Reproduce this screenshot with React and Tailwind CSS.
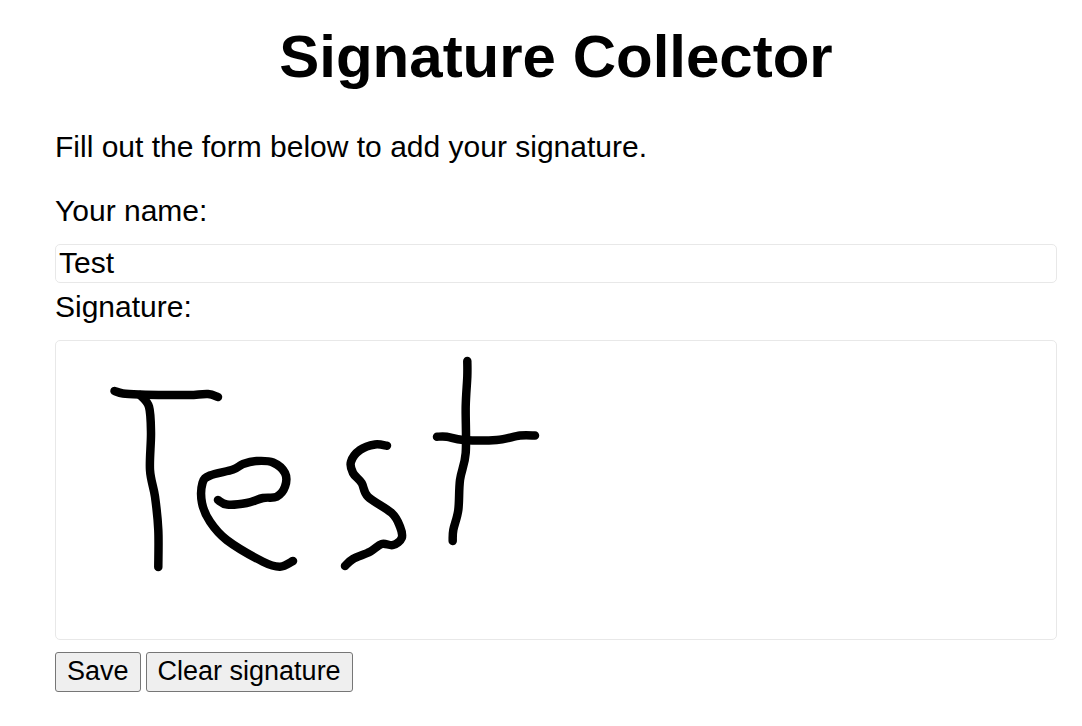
const strokes = [
  [[114.5,391],[123,393.5],[140,394.5],[166.7,395],[190,395],[208,394],[218,397]],
  [[140,395],[149,406.7],[151,433],[150,470],[155,496.7],[158.3,530],[158.3,567]],
  [[218,500],[227,504.5],[246.7,503],[263,498],[276.7,496.7],[285,486.7],[285,473],[273,462.5],[256.7,461],[243,464],[233,469.5],[210,475.5],[202.5,483],[202,503],[210,521.7],[226.7,540],[263,561.7],[280,566.7],[293,561]],
  [[387,445.7],[375,444.5],[360,450],[351,461.7],[353,473],[361.7,483],[368,496.7],[391.7,513],[400,526.7],[401.7,538],[393,545],[381.7,544],[370,551.7],[353,559],[345,566]],
  [[467.3,361],[467.3,376.7],[465.7,406.7],[465.7,453],[460,480],[458.3,510],[453.3,530],[452.7,541]],
  [[437,436.7],[446.7,436.7],[463.3,440],[496.7,440],[520,435.5],[535,435.5]],
];

function smooth(points) {
  let d = `M${points[0][0]} ${points[0][1]}`;
  for (let i = 0; i < points.length - 1; i++) {
    const p0 = points[Math.max(i - 1, 0)];
    const p1 = points[i];
    const p2 = points[i + 1];
    const p3 = points[Math.min(i + 2, points.length - 1)];
    const c1x = p1[0] + (p2[0] - p0[0]) / 6;
    const c1y = p1[1] + (p2[1] - p0[1]) / 6;
    const c2x = p2[0] - (p3[0] - p1[0]) / 6;
    const c2y = p2[1] - (p3[1] - p1[1]) / 6;
    d += ` C${c1x} ${c1y} ${c2x} ${c2y} ${p2[0]} ${p2[1]}`;
  }
  return d;
}

export default function App() {
  return (
    <div className="min-h-[726px] bg-white pl-[55px] pr-[25px] pt-[22px] text-[30px] text-black font-['Liberation_Sans',Arial,sans-serif]">
      <h1 className="text-center text-[60px] font-bold leading-[69px]">Signature Collector</h1>
      <p className="mt-[39px] leading-[34px]">Fill out the form below to add your signature.</p>
      <form className="mt-[30px]">
        <label className="block leading-[34px]">Your name:</label>
        <div className="mt-[16px] flex h-[39px] w-full items-start rounded-[5px] border border-[#e8e8e8] px-[3px] text-[30px] leading-[34px]">
          <input readOnly value="Test" className="block h-[36px] w-full text-[30px] leading-[34px] outline-none" />
        </div>
        <label className="mt-[7px] block leading-[34px]">Signature:</label>
        <div className="mt-[16px] h-[300px] w-full rounded-[5px] border border-[#e8e8e8] bg-white">
          <svg className="block h-[298px] w-[1000px]" viewBox="56 341 1000 298" fill="none">
            {strokes.map((s, i) => (
              <path key={i} d={smooth(s)} stroke="#000" strokeWidth="8.5" strokeLinecap="round" strokeLinejoin="round" />
            ))}
          </svg>
        </div>
        <div className="mt-[12px] flex gap-[5px]">
          <button type="button" className="h-[40px] rounded-[3px] border border-[#767676] bg-[#efefef] px-[11px] pb-[2px] text-[27px] leading-[31px]">Save</button>
          <button type="button" className="h-[40px] rounded-[3px] border border-[#767676] bg-[#efefef] px-[11px] pb-[2px] text-[27px] leading-[31px]">Clear signature</button>
        </div>
      </form>
    </div>
  );
}
